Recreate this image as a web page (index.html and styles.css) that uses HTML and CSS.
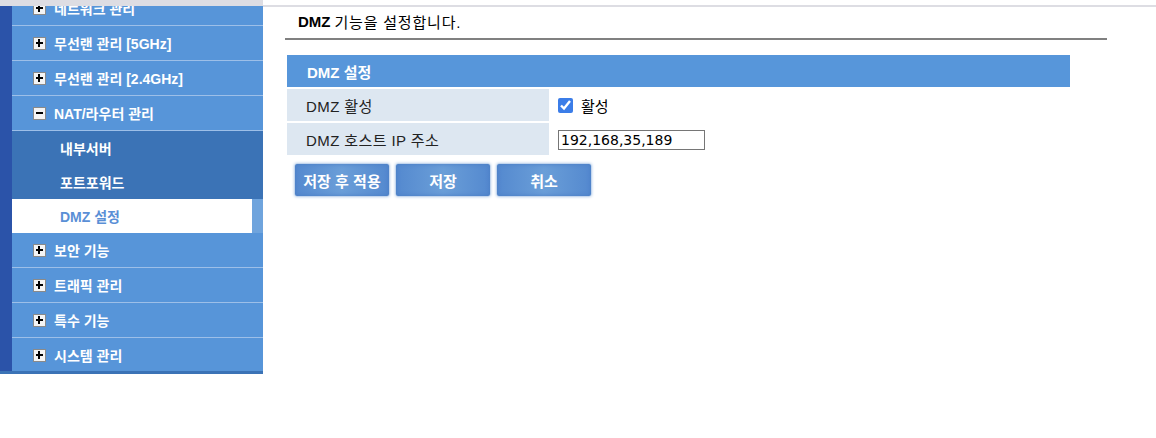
FILE: index.html
```html
<!DOCTYPE html>
<html lang="ko">
<head>
<meta charset="utf-8">
<link rel="stylesheet" href="styles.css">
</head>
<body>
<div class="page">
  <aside class="sidebar">
    <div class="side-body">
      <div class="strip"></div>
      <nav class="menu">
        <div class="menu-inner">
          <div class="item"><span class="box plus"></span><span>네트워크 관리</span></div>
          <div class="item"><span class="box plus"></span><span>무선랜 관리 [5GHz]</span></div>
          <div class="item"><span class="box plus"></span><span>무선랜 관리 [2.4GHz]</span></div>
          <div class="item"><span class="box minus"></span><span>NAT/라우터 관리</span></div>
          <div class="submenu">
            <div class="sub">내부서버</div>
            <div class="sub">포트포워드</div>
            <div class="sub active">DMZ 설정</div>
          </div>
          <div class="item"><span class="box plus"></span><span>보안 기능</span></div>
          <div class="item"><span class="box plus"></span><span>트래픽 관리</span></div>
          <div class="item"><span class="box plus"></span><span>특수 기능</span></div>
          <div class="item"><span class="box plus"></span><span>시스템 관리</span></div>
        </div>
      </nav>
    </div>
    <div class="side-foot"></div>
  </aside>
  <main class="main">
    <div class="title"><b>DMZ</b> 기능을 설정합니다.</div>
    <div class="panel">
      <div class="panel-head">DMZ 설정</div>
      <div class="row">
        <div class="label">DMZ 활성</div>
        <div class="value"><label class="check"><input type="checkbox" checked><span>활성</span></label></div>
      </div>
      <div class="row">
        <div class="label">DMZ 호스트 IP 주소</div>
        <div class="value"><input class="ip" type="text" value="192,168,35,189"></div>
      </div>
      <div class="buttons">
        <button class="btn">저장 후 적용</button>
        <button class="btn">저장</button>
        <button class="btn">취소</button>
      </div>
    </div>
  </main>
</div>
</body>
</html>
```

FILE: styles.css
```css
* { box-sizing: border-box; }
html, body { margin: 0; padding: 0; background: #fff; }
body {
  font-family: "Noto Sans CJK KR", "Liberation Sans", sans-serif;
  font-size: 14px;
  color: #222;
}
.page { display: flex; align-items: flex-start; }

/* sidebar */
.sidebar {
  width: 263px;
  flex: none;
  border-top: 6px solid #dddde3;
  display: flex;
  flex-direction: column;
}
.side-body { display: flex; height: 365px; overflow: hidden; }
.strip { width: 12px; background: #2b53a9; flex: none; }
.menu { flex: 1; background: #5795d9; overflow: hidden; }
.menu-inner { margin-top: -15px; }
.item {
  height: 35px;
  border-bottom: 1px solid #9dbfe8;
  display: flex;
  align-items: center;
  gap: 8px;
  padding-left: 21px;
  color: #fff;
  font-weight: bold;
  font-family: "Liberation Sans", "Noto Sans CJK KR", sans-serif;
  font-size: 14px;
}
.box {
  width: 13px; height: 13px;
  border: 1px solid #8a8a8a;
  background: #f4f4f4;
  position: relative;
  flex: none;
}
.box::before {
  content: "";
  position: absolute;
  left: 2px; top: 4px;
  width: 7px; height: 2px;
  background: #000;
}
.box.plus::after {
  content: "";
  position: absolute;
  left: 4px; top: 1px;
  width: 2px; height: 8px;
  background: #000;
}
.submenu { background: #3b73b6; }
.sub {
  height: 34px;
  display: flex;
  align-items: center;
  padding-left: 48px;
  color: #fff;
  font-weight: bold;
  font-family: "Liberation Sans", "Noto Sans CJK KR", sans-serif;
  font-size: 14px;
}
.sub.active {
  background: #fff;
  color: #5a8fd6;
  border-right: 11px solid #6fa4dd;
}
.side-foot { height: 3px; background: #3b73b6; }

/* main */
.main {
  flex: 1;
  margin-top: 5px;
  border-top: 2px solid #dddde3;
  padding-left: 22px;
}
.title {
  width: 822px;
  height: 33px;
  border-bottom: 2px solid #808080;
  padding-left: 13px;
  padding-bottom: 2px;
  display: flex;
  align-items: center;
  color: #000;
  font-size: 15px;
  letter-spacing: 0.8px;
  font-family: "Liberation Sans", "Noto Sans CJK KR", sans-serif;
}
.title b { margin-right: 4px; letter-spacing: 0; }
.panel { width: 785px; margin-top: 15px; padding-left: 2px; }
.panel-head {
  height: 32px;
  background: #5796da;
  color: #fff;
  font-weight: bold;
  font-size: 15px;
  font-family: "Liberation Sans", "Noto Sans CJK KR", sans-serif;
  display: flex;
  align-items: center;
  padding-left: 20px;
}
.row { display: flex; margin-top: 2px; height: 32px; }
.label {
  width: 262px;
  background: #dde7f1;
  display: flex;
  align-items: center;
  padding-left: 19px;
  font-size: 15px;
  letter-spacing: 0.4px;
  font-family: "Liberation Sans", "Noto Sans CJK KR", sans-serif;
  color: #222;
}
.value {
  flex: 1;
  display: flex;
  align-items: center;
  padding-left: 9px;
}
.check { display: flex; align-items: center; gap: 8px; color: #000; font-size: 15px; }
.check input {
  margin: 0;
  width: 15px; height: 15px;
  accent-color: #3b7de8;
}
.ip {
  width: 147px;
  height: 20px;
  border: 1px solid #767676;
  padding: 0 2px;
  font-family: "DejaVu Sans", sans-serif;
  font-size: 14px;
  color: #000;
  margin-top: 2px;
}
.buttons { display: flex; gap: 5px; padding-left: 7px; margin-top: 8px; }
.btn {
  width: 96px;
  height: 34px;
  border: 1px solid #c3d6ee;
  border-radius: 3px;
  background: linear-gradient(90deg, #5489cf, #6a9ed8 50%, #5489cf);
  box-shadow: 0 0 3px #b5cdea, inset 0 0 4px #4a7cc2;
  color: #fff;
  font-weight: bold;
  font-family: "Noto Sans CJK KR", sans-serif;
  font-size: 15px;
  padding: 0;
}
```
